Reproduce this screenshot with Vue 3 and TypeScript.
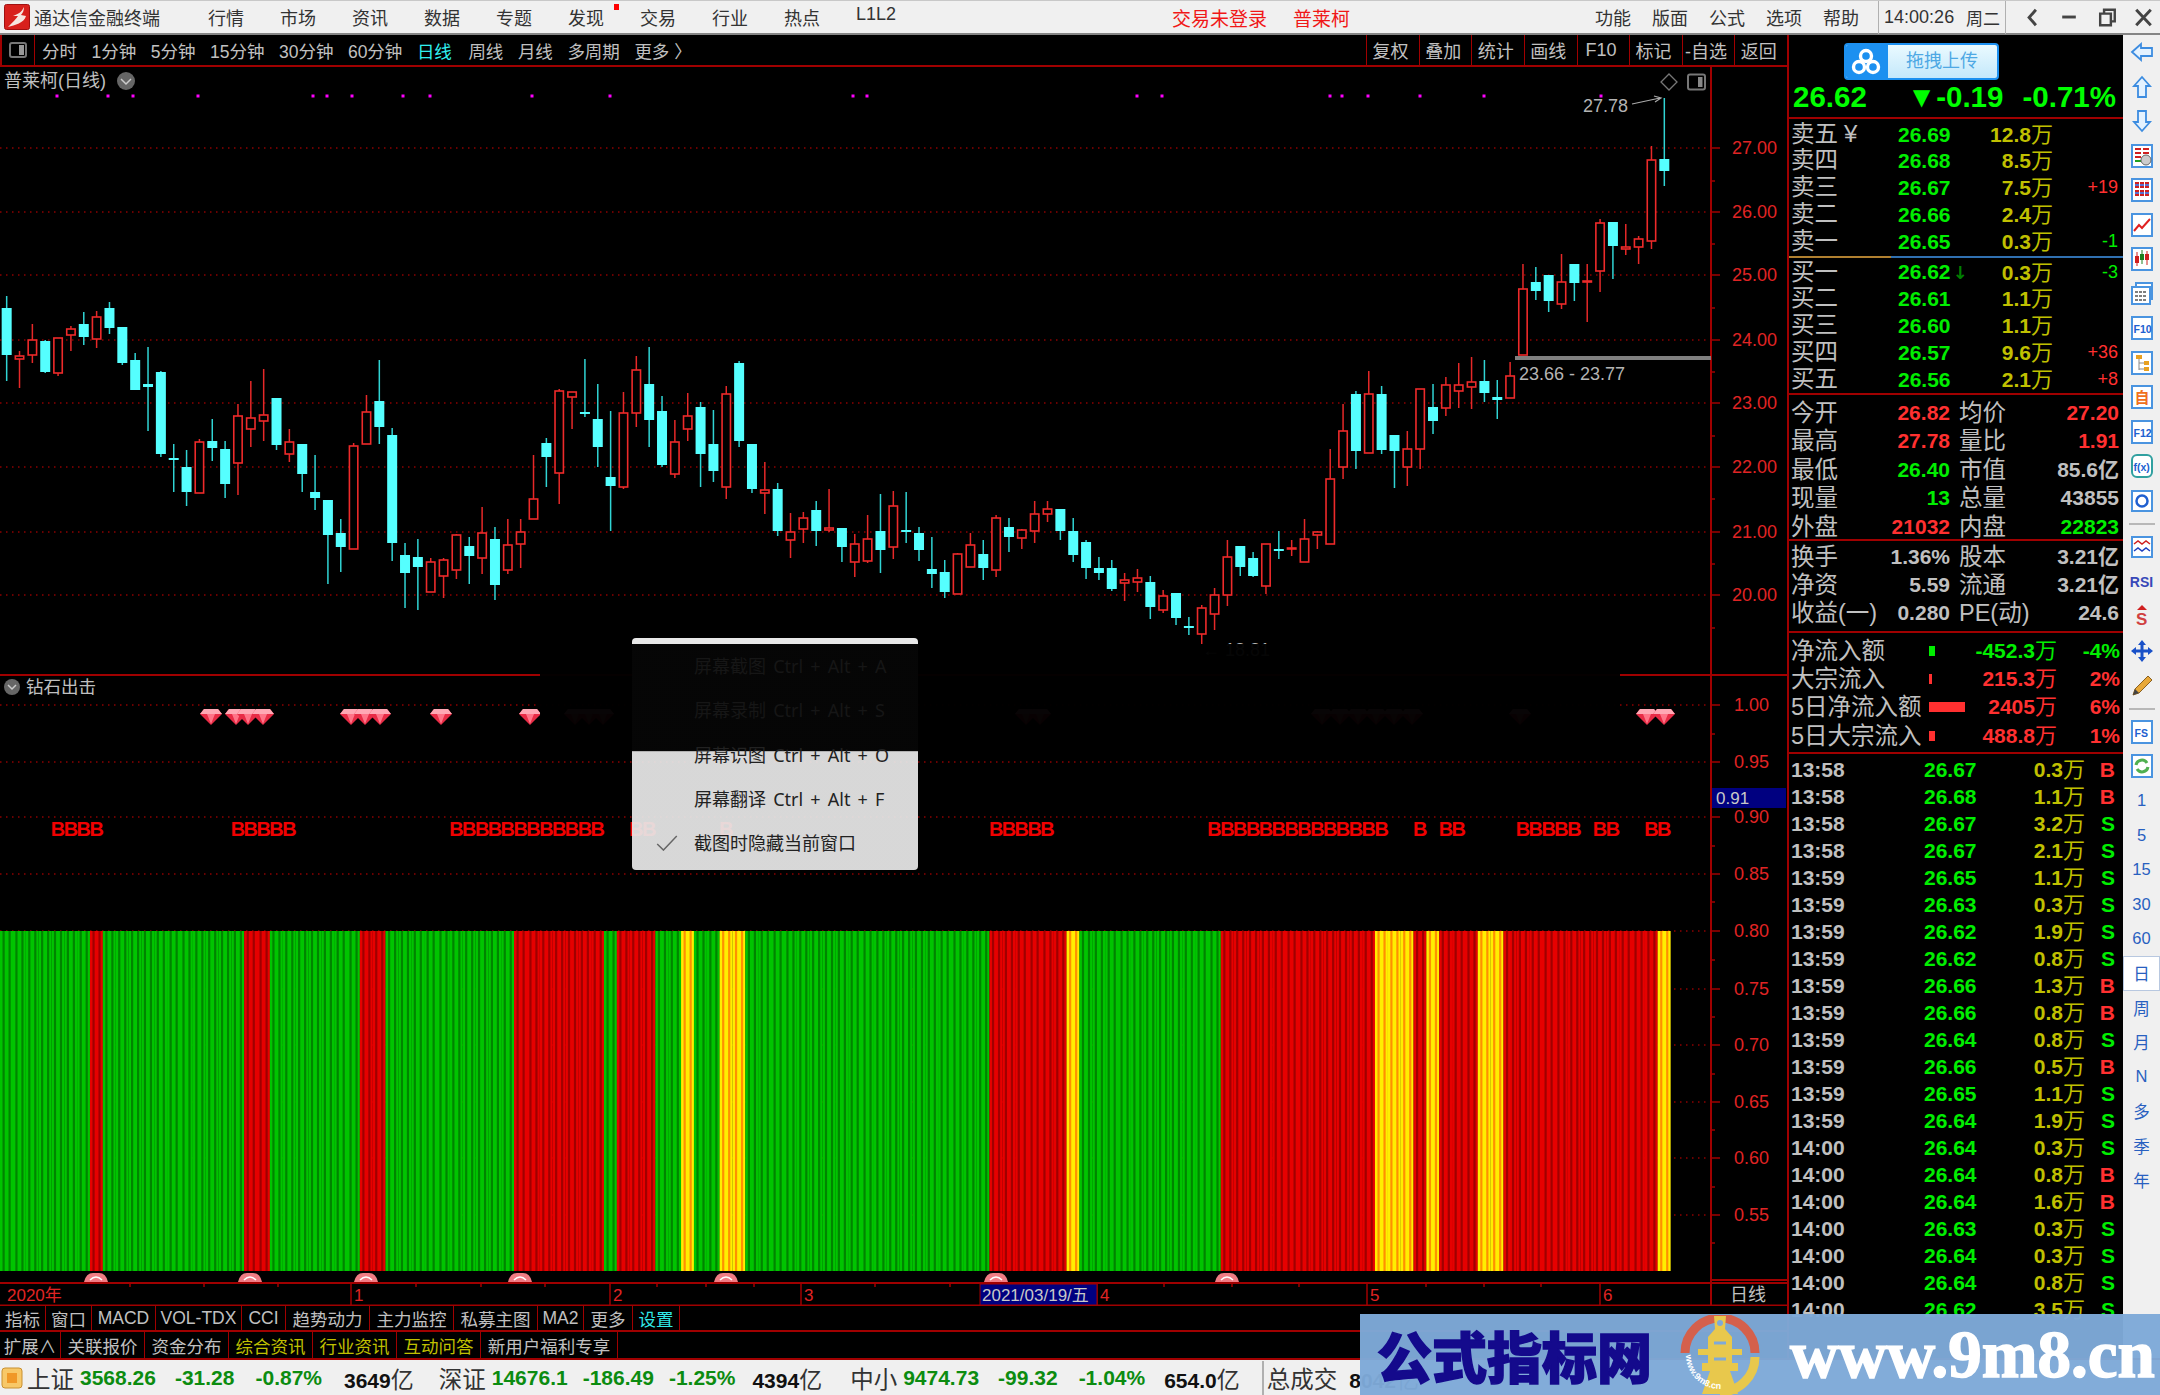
<template>
  <div class="terminal">
    <header class="titlebar">
      <svg class="logo" viewBox="0 0 26 26">
        <rect x="0.5" y="0.5" width="25" height="25" rx="2" fill="#d8201c" stroke="#a01010" />
        <path d="M20 3 C17 9 14 10 9 12 L14 12 C12 15 9 18 4 23 C11 21 20 19 22 12 L17 11 C19 9 20 6 20 3 Z" fill="#f6e6e0" />
      </svg>
      <span class="appname">通达信金融终端</span>
      <nav class="menu">
        <span v-for="m in mainMenu" :key="m" :class="{ dotted: m === '发现' }">{{ m }}</span>
      </nav>
      <span class="login">交易未登录</span>
      <span class="stockname">普莱柯</span>
      <nav class="menu right">
        <span v-for="m in sideMenu" :key="m">{{ m }}</span>
      </nav>
      <div class="clock"><b>14:00:26</b><span>周二</span></div>
      <div class="winctl">
        <svg viewBox="0 0 37 34"><path d="M22 9 L15 17 L22 25" fill="none" stroke="#444" stroke-width="3" /></svg>
        <svg viewBox="0 0 37 34"><rect x="11" y="15" width="14" height="3" fill="#444" /></svg>
        <svg viewBox="0 0 37 34"><path d="M12 13 h11 v12 h-11 z M16 13 v-4 h11 v12 h-4" fill="none" stroke="#444" stroke-width="2.5" /></svg>
        <svg viewBox="0 0 37 34"><path d="M11 9 L26 25 M26 9 L11 25" fill="none" stroke="#444" stroke-width="3" /></svg>
      </div>
    </header>

    <div class="body">
      <section class="left">
        <div class="toolbar">
          <div class="toggle">
            <svg viewBox="0 0 18 16" width="18" height="16"><rect x="1" y="1" width="16" height="14" rx="2" fill="none" stroke="#777" stroke-width="2" /><rect x="10" y="3" width="5" height="10" fill="#999" /></svg>
          </div>
          <div class="periods">
            <span v-for="p in periods" :key="p" :class="{ active: p === '日线' }">{{ p }}</span>
          </div>
          <div class="actions">
            <span v-for="a in actions" :key="a">{{ a }}</span>
          </div>
        </div>

        <svg class="chart" viewBox="0 67 1787 1239" width="1787" height="1239">
          <!-- grid and axis ticks -->
          <line v-for="y in priceGrid" :key="'g' + y" x1="0" x2="1711" :y1="y" :y2="y" class="grid" />
          <line v-for="t in lowerGrid" :key="'l' + t.y" x1="0" x2="1711" :y1="t.y" :y2="t.y" class="grid" />
          <line v-for="y in priceGrid" :key="'t' + y" x1="1711" x2="1720" :y1="y" :y2="y" class="rule" />
          <line v-for="t in lowerGrid" :key="'u' + t.y" x1="1711" x2="1720" :y1="t.y" :y2="t.y" class="rule" />
          <line v-for="y in minorTicks" :key="'m' + y" x1="1711" x2="1715" :y1="y" :y2="y" class="rule" />
          <text v-for="(y, i) in priceGrid" :key="'p' + y" x="1732" :y="y" class="axis">{{ (27 - i).toFixed(2) }}</text>
          <text v-for="t in lowerGrid" :key="'v' + t.y" x="1734" :y="t.y" class="axis">{{ t.label }}</text>

          <!-- frame -->
          <line x1="1711" x2="1711" y1="67" y2="1306" class="rule wide" />
          <line x1="0" x2="1787" y1="675" y2="675" class="rule wide" />
          <line x1="1711" x2="1787" y1="1280" y2="1280" class="rule wide" />
          <line x1="0" x2="1787" y1="1283" y2="1283" class="rule wide" />
          <line x1="0" x2="1787" y1="1305.5" y2="1305.5" class="rule wide" />

          <!-- title row -->
          <text x="4" y="81" class="label title-label">普莱柯(日线)</text>
          <circle cx="126" cy="81" r="9" fill="#666" />
          <path d="M121 79 L126 84 L131 79" fill="none" stroke="#ccc" stroke-width="1.5" />
          <rect v-for="x in signalDots" :key="'d' + x" :x="x - 1.5" y="94.5" width="3" height="3" fill="#ff00ff" />
          <path d="M1669 74 L1677 82 L1669 90 L1661 82 Z" fill="none" stroke="#777" stroke-width="1.3" />
          <rect x="1688" y="74.5" width="17" height="15" rx="2" fill="none" stroke="#777" stroke-width="2" />
          <rect x="1698" y="77" width="4.5" height="10" fill="#888" />

          <!-- candles -->
          <g v-for="(c, i) in candles" :key="'c' + i">
            <line :x1="cx(i)" :x2="cx(i)" :y1="c[0]" :y2="c[1]" :class="c[4] ? 'wick-up' : 'wick-down'" />
            <line :x1="cx(i)" :x2="cx(i)" :y1="c[2]" :y2="c[3]" :class="c[4] ? 'wick-up' : 'wick-down'" />
            <rect v-if="c[4]" :x="cx(i) - 4.2" :y="c[1]" width="8.4" :height="Math.max(c[2] - c[1], 1)" class="body-up" />
            <rect v-else :x="cx(i) - 5" :y="c[1]" width="10" :height="Math.max(c[2] - c[1], 2)" class="body-down" />
          </g>
          <path d="M1632 104 L1660 98 M1654 96 L1661 98 L1655 102" fill="none" stroke="#aaa" stroke-width="1.2" />
          <text x="1583" y="106" class="note">27.78</text>
          <rect x="1515" y="356" width="196" height="4" fill="#808080" />
          <text x="1519" y="374" class="note">23.66 - 23.77</text>
          <text x="1202" y="650" class="note">← 18.81</text>

          <!-- lower pane -->
          <circle cx="12" cy="687" r="8" fill="#666" />
          <path d="M8 685 L12 689 L16 685" fill="none" stroke="#ccc" stroke-width="1.5" />
          <text x="26" y="687" class="label">钻石出击</text>
          <g v-for="x in gems" :key="'e' + x" :transform="`translate(${x} 717)`">
            <path d="M-11 -3 L-7 -8 L7 -8 L11 -3 L0 8 Z" fill="#e82c46" />
            <path d="M-11 -3 L-7 -8 L7 -8 L11 -3 Z" fill="#ffa8b4" />
            <path d="M-4 -3 L0 7 L4 -3 Z" fill="#ff7488" />
          </g>
          <text v-for="i in buySignals" :key="'b' + i" :x="cx(i)" y="829" class="buy">B</text>

          <g v-for="b in bars" :key="'s' + b.x">
            <rect :x="b.x" y="931" width="13" height="340" :fill="b.fill" />
            <rect :x="b.x + 2.5" y="931" width="2.2" height="340" :fill="b.dark" />
            <rect :x="b.x + 8.5" y="931" width="2.2" height="340" :fill="b.dark" />
          </g>

          <g v-for="x in humps" :key="'h' + x" :transform="`translate(${x} 1282)`">
            <path d="M-12 0 Q-10 -9 -3 -9 L3 -9 Q10 -9 12 0 Z" fill="#f07c84" />
            <path d="M-6 -2 Q0 -8 6 -2" fill="none" stroke="#fff" stroke-width="1.5" />
          </g>

          <!-- date axis -->
          <line v-for="x in dateTicks" :key="'k' + x" :x1="x" :x2="x" y1="1283" y2="1287" class="rule" />
          <line v-for="m in months" :key="'n' + m.x" :x1="m.x" :x2="m.x" y1="1283" y2="1305" class="rule" />
          <text x="7" y="1295" class="date">2020年</text>
          <text v-for="m in months" :key="'o' + m.x" :x="m.x + 3" y="1295" class="date">{{ m.label }}</text>
          <rect x="980" y="1284" width="117" height="21" fill="#000080" stroke="#a00000" />
          <text x="982" y="1295" class="cursor-date">2021/03/19/五</text>
          <text x="1730" y="1295" class="label small">日线</text>
          <rect x="1712" y="788" width="74" height="20" fill="#000080" />
          <text x="1716" y="798" class="cursor-date">0.91</text>
        </svg>

        <div class="tabs first">
          <span v-for="t in tabsTop" :key="t" :class="{ cyan: t === '设置' }">{{ t }}</span>
        </div>
        <div class="tabs second">
          <span v-for="(t, i) in tabsBottom" :key="t" :class="{ olive: i >= 3 && i <= 5 }">{{ t }}</span>
        </div>
      </section>

      <aside class="side">
        <div class="quote">
          <div class="stock-head">普莱柯 603566</div>
          <div class="last">
            <span class="now">26.62</span>
            <span class="chg">▼-0.19</span>
            <span class="pct">-0.71%</span>
          </div>
        </div>
        <div class="book asks">
          <div v-for="r in asks" :key="r.name" class="book-row">
            <span class="cn">{{ r.name }}<i v-if="r.name === '卖五'" class="yen">¥</i></span>
            <span class="green num">{{ r.price }}</span>
            <span class="vol num">{{ r.vol }}<em>万</em></span>
            <span class="num delta" :class="r.delta.startsWith('-') ? 'green' : 'red'">{{ r.delta }}</span>
          </div>
        </div>
        <div class="book bids">
          <div v-for="r in bids" :key="r.name" class="book-row">
            <span class="cn">{{ r.name }}</span>
            <span class="green num">{{ r.price }}<i v-if="r.name === '买一'" class="down">↓</i></span>
            <span class="vol num">{{ r.vol }}<em>万</em></span>
            <span class="num delta" :class="r.delta.startsWith('-') ? 'green' : 'red'">{{ r.delta }}</span>
          </div>
        </div>
        <div class="stats">
          <div v-for="r in statsA" :key="r[0]" class="stat-row">
            <span class="cn">{{ r[0] }}</span><span class="num" :class="r[2]">{{ r[1] }}</span>
            <span class="cn">{{ r[3] }}</span><span class="num" :class="r[5]">{{ r[4] }}</span>
          </div>
        </div>
        <div class="stats second">
          <div v-for="r in statsB" :key="r[0]" class="stat-row">
            <span class="cn">{{ r[0] }}</span><span class="num gray">{{ r[1] }}</span>
            <span class="cn">{{ r[2] }}</span><span class="num gray">{{ r[3] }}</span>
          </div>
        </div>
        <div class="flows">
          <div v-for="f in flows" :key="f.name" class="flow-row">
            <span class="cn">{{ f.name }}</span>
            <span class="flow-mid" :class="f.up ? 'red' : 'green'">
              <i class="bar" :style="{ width: f.bar + 'px' }"></i>
              <span class="num">{{ f.value }}<em>万</em></span>
            </span>
            <span class="num flow-pct" :class="f.up ? 'red' : 'green'">{{ f.pct }}</span>
          </div>
        </div>
        <div class="ticks">
          <div v-for="(t, i) in ticks" :key="i" class="tick-row">
            <span class="num gray">{{ t[0] }}</span>
            <span class="num green">{{ t[1] }}</span>
            <span class="vol num">{{ t[2] }}<em>万</em></span>
            <span class="num flag" :class="t[3] === 'B' ? 'red' : 'green'">{{ t[3] }}</span>
          </div>
        </div>
      </aside>

      <aside class="strip">
        <div class="tool"><svg viewBox="0 0 24 24"><path d="M2 12 L11 4 V8 H22 V16 H11 V20 Z" class="ol" /></svg></div>
        <div class="tool"><svg viewBox="0 0 24 24"><path d="M12 2 L20 11 H16 V22 H8 V11 H4 Z" class="ol" /></svg></div>
        <div class="tool"><svg viewBox="0 0 24 24"><path d="M12 22 L20 13 H16 V2 H8 V13 H4 Z" class="ol" /></svg></div>
        <div class="tool"><svg viewBox="0 0 24 24"><rect x="2" y="1" width="20" height="22" class="tile" /><path d="M5 5h6M13 5h6M5 9h6M13 9h6M5 13h6" stroke="#d02020" stroke-width="2" /><path d="M5 17h6" stroke="#20a020" stroke-width="2" /><circle cx="16" cy="16" r="5" fill="#ccc" stroke="#666" /></svg></div>
        <div class="tool"><svg viewBox="0 0 24 24"><rect x="2" y="1" width="20" height="22" class="tile" /><path d="M5 5h14M5 9h14M5 13h14M5 17h14" stroke="#d02020" stroke-width="2" stroke-dasharray="4 1" /><path d="M5 7h14M5 15h14" stroke="#2040c0" stroke-width="1.5" stroke-dasharray="4 1" /></svg></div>
        <div class="tool"><svg viewBox="0 0 24 24"><rect x="2" y="1" width="20" height="22" class="tile" /><path d="M4 18 L9 12 L12 15 L20 6" fill="none" stroke="#e02020" stroke-width="2" /></svg></div>
        <div class="tool"><svg viewBox="0 0 24 24"><rect x="2" y="1" width="20" height="22" class="tile" /><path d="M7 5v14M17 4v14" stroke="#d02020" /><rect x="5" y="9" width="4" height="7" fill="#d02020" /><path d="M12 3v14" stroke="#208020" /><rect x="10" y="7" width="4" height="6" fill="#208020" /><rect x="15" y="7" width="4" height="6" fill="#d02020" /></svg></div>
        <div class="tool"><svg viewBox="0 0 24 24"><rect x="6" y="1" width="16" height="16" class="tile" /><rect x="2" y="5" width="18" height="17" class="tile" /><path d="M5 10h12M5 14h12M5 18h12" stroke="#555" stroke-width="1.5" stroke-dasharray="3 1" /></svg></div>
        <div class="tool"><svg viewBox="0 0 24 24"><rect x="2" y="1" width="20" height="22" class="tile" /><text x="3.5" y="17" class="glyph">F10</text></svg></div>
        <div class="tool"><svg viewBox="0 0 24 24"><rect x="2" y="1" width="20" height="22" class="tile" /><path d="M9 7v12M9 12h5M9 18h5" stroke="#888" /><rect x="6" y="4" width="6" height="4" fill="#e8a020" /><rect x="14" y="10" width="5" height="4" fill="#e8a020" /><rect x="14" y="16" width="5" height="4" fill="#e8a020" /></svg></div>
        <div class="tool"><svg viewBox="0 0 24 24"><rect x="2" y="1" width="20" height="22" class="tile" /><text x="4.5" y="17.5" class="glyph orange">自</text></svg></div>
        <div class="tool"><svg viewBox="0 0 24 24"><rect x="2" y="1" width="20" height="22" class="tile" /><text x="3.5" y="17" class="glyph">F12</text></svg></div>
        <div class="tool"><svg viewBox="0 0 24 24"><rect x="2" y="1" width="20" height="22" rx="5" class="tile teal" /><text x="3.5" y="16.5" class="glyph">f(x)</text></svg></div>
        <div class="tool"><svg viewBox="0 0 24 24"><rect x="2" y="2" width="20" height="20" class="tile" /><circle cx="12" cy="12" r="5.5" fill="none" stroke="#2060d0" stroke-width="2.5" /></svg></div>
        <div class="tool-sep"></div>
        <div class="tool"><svg viewBox="0 0 24 24"><rect x="2" y="2" width="20" height="20" class="tile" /><path d="M4 9 L8 6 L12 9 L16 6 L20 9" fill="none" stroke="#d02020" stroke-width="1.5" /><path d="M4 16 L8 13 L12 16 L16 13 L20 16" fill="none" stroke="#2040c0" stroke-width="1.5" /></svg></div>
        <div class="tool"><span class="rsi">RSI</span></div>
        <div class="tool"><svg viewBox="0 0 24 24"><path d="M12 1 L17 6 H7 Z" fill="#d02020" /><text x="6" y="21" class="glyph dollar">S</text></svg></div>
        <div class="tool"><svg viewBox="0 0 24 24"><path d="M12 1 L16 6 H8 Z M12 23 L16 18 H8 Z M1 12 L6 8 V16 Z M23 12 L18 8 V16 Z" fill="#1850c8" /><path d="M12 5 V19 M5 12 H19" stroke="#1850c8" stroke-width="3" /></svg></div>
        <div class="tool"><svg viewBox="0 0 24 24"><path d="M3 22 L5 16 L18 3 L22 7 L9 20 Z" fill="#e8a838" stroke="#8a6020" /><path d="M3 22 L5 16 L9 20 Z" fill="#444" /></svg></div>
        <div class="tool-sep"></div>
        <div class="tool"><svg viewBox="0 0 24 24"><rect x="2" y="1" width="20" height="22" class="tile" /><text x="4.5" y="17" class="glyph">FS</text></svg></div>
        <div class="tool"><svg viewBox="0 0 24 24"><rect x="2" y="1" width="20" height="22" class="tile" /><path d="M6 11 A6 6 0 0 1 17 9 M18 13 A6 6 0 0 1 7 15" fill="none" stroke="#50b050" stroke-width="3" /></svg></div>
        <div v-for="p in stripLabels" :key="p" class="tool text" :class="{ picked: p === '日' }">{{ p }}</div>
      </aside>
    </div>

    <footer class="statusbar">
      <svg class="status-icon" viewBox="0 0 22 22"><rect x="1" y="1" width="20" height="20" rx="3" fill="#f8c868" stroke="#c89030" /><rect x="6" y="6" width="10" height="10" fill="#f09828" /></svg>
      <div v-for="s in indices" :key="s.name" class="idx">
        <span class="idx-name">{{ s.name }}</span>
        <span class="idx-val">{{ s.val }}</span>
        <span class="idx-chg">{{ s.chg }}</span>
        <span class="idx-pct">{{ s.pct }}</span>
        <span class="idx-amt">{{ s.amt }}<em>亿</em></span>
      </div>
      <div class="idx-total"><span class="idx-name">总成交</span><span class="idx-amt">8042<em>亿</em></span></div>
    </footer>

    <!-- the screenshot tool left its menu on top of the chart -->
    <div class="shade"></div>
    <div class="shot-menu">
      <div v-for="m in shotItems" :key="m" class="shot-item">{{ m }}</div>
      <svg class="shot-check" viewBox="0 0 24 18"><path d="M1 10 L8 17 L23 1" fill="none" stroke="#666" stroke-width="1.6" /></svg>
    </div>

    <div class="upload">
      <span class="upload-icon">
        <svg viewBox="0 0 44 37" width="44" height="37"><g fill="none" stroke="#fff" stroke-width="3.4"><circle cx="22" cy="13" r="5.5" /><circle cx="15" cy="24" r="5.5" /><circle cx="29" cy="24" r="5.5" /></g></svg>
      </span>
      <span class="upload-text">拖拽上传</span>
    </div>

    <div class="watermark">
      <span class="wm-title">公式指标网</span>
      <svg class="wm-logo" viewBox="0 0 80 80" width="80" height="80">
        <path id="wmArc" d="M6 40 A34 34 0 0 0 40 74" fill="none" />
        <path d="M5 38 A35 35 0 0 1 75 38" fill="none" stroke="#d4604c" stroke-width="9" />
        <path d="M75 42 A35 35 0 0 1 40 77" fill="none" stroke="#e8c84c" stroke-width="9" />
        <path d="M34 1 H46 L45 14 L52 22 V34 L62 34 V40 L52 40 V48 L58 48 V56 L50 56 L58 79 H22 L30 56 L22 56 V48 L28 48 V40 L18 40 V34 L28 34 V22 L35 14 Z" fill="#e8c84c" />
        <circle cx="40" cy="8" r="3" fill="#7ea9d8" />
        <path d="M34 28 H46 M34 44 H46" stroke="#7ea9d8" stroke-width="3" />
        <text class="wm-small"><textPath href="#wmArc">www.9m8.cn</textPath></text>
      </svg>
      <span class="wm-url">www.9m8.cn</span>
    </div>
  </div>
</template>

<script setup lang="ts">
// high, body top, body bottom, low, 1 = rising (hollow red) / 0 = falling (solid cyan)
type Candle = [number, number, number, number, number]

const candles: Candle[] = [
  [296, 308, 355, 381, 0], [351, 356, 359, 388, 1], [324, 340, 355, 363, 1], [340, 341, 372, 373, 0], [338, 338, 373, 376, 1],
  [326, 329, 335, 351, 1], [312, 324, 337, 345, 0], [311, 317, 339, 348, 1], [302, 308, 328, 334, 0], [327, 327, 363, 365, 0],
  [353, 360, 390, 390, 0], [347, 384, 387, 431, 0], [371, 372, 454, 457, 0], [444, 458, 459, 492, 0], [450, 467, 492, 506, 0],
  [439, 442, 493, 493, 1], [419, 441, 448, 461, 0], [441, 449, 484, 498, 0], [404, 416, 463, 495, 1], [381, 418, 429, 447, 1],
  [369, 415, 421, 441, 1], [398, 398, 445, 450, 0], [429, 442, 454, 462, 1], [444, 444, 474, 492, 0], [455, 492, 498, 510, 0],
  [500, 500, 535, 584, 0], [519, 533, 547, 572, 0], [443, 446, 549, 549, 1], [395, 412, 444, 444, 1], [360, 401, 427, 444, 0],
  [428, 435, 543, 561, 0], [543, 555, 573, 608, 0], [539, 557, 567, 610, 0], [558, 562, 592, 592, 1], [558, 560, 576, 598, 1],
  [534, 535, 570, 579, 1], [537, 546, 556, 584, 0], [507, 533, 558, 574, 1], [527, 539, 585, 600, 0], [519, 545, 570, 574, 1],
  [519, 532, 544, 568, 1], [455, 499, 519, 519, 1], [438, 443, 457, 487, 0], [389, 391, 473, 504, 1], [392, 392, 397, 429, 1],
  [359, 412, 414, 417, 0], [384, 419, 447, 467, 0], [411, 477, 486, 531, 0], [392, 413, 487, 489, 1], [356, 370, 413, 427, 1],
  [347, 384, 420, 447, 0], [396, 411, 465, 467, 0], [420, 442, 474, 478, 1], [393, 416, 429, 441, 1], [402, 407, 454, 487, 0],
  [410, 444, 471, 482, 0], [386, 394, 487, 499, 1], [361, 363, 441, 447, 0], [444, 444, 489, 493, 0], [462, 490, 493, 514, 1],
  [483, 489, 531, 536, 0], [513, 532, 540, 558, 1], [512, 518, 529, 543, 1], [501, 510, 531, 546, 0], [489, 528, 530, 532, 1],
  [528, 528, 547, 562, 0], [534, 544, 562, 577, 1], [515, 539, 561, 563, 1], [494, 531, 550, 573, 0], [491, 506, 547, 559, 1],
  [492, 530, 532, 543, 0], [527, 533, 550, 561, 0], [537, 569, 574, 588, 0], [560, 572, 592, 598, 0], [553, 554, 594, 594, 1],
  [533, 545, 567, 567, 1], [540, 554, 568, 580, 0], [515, 518, 570, 577, 1], [518, 527, 537, 552, 0], [529, 530, 538, 549, 1],
  [501, 514, 531, 543, 1], [501, 509, 514, 522, 1], [509, 509, 531, 540, 0], [518, 531, 555, 562, 0], [540, 542, 568, 579, 0],
  [557, 568, 573, 580, 0], [560, 568, 589, 591, 0], [573, 580, 583, 601, 1], [569, 578, 582, 592, 1], [576, 582, 607, 619, 0],
  [590, 596, 610, 613, 1], [593, 593, 618, 625, 0], [617, 626, 628, 635, 0], [605, 608, 634, 644, 1], [588, 595, 614, 630, 1],
  [540, 557, 595, 606, 1], [546, 546, 567, 576, 0], [552, 558, 576, 577, 0], [544, 544, 586, 594, 1], [531, 549, 550, 559, 0],
  [540, 548, 549, 556, 1], [519, 539, 562, 562, 1], [531, 532, 535, 549, 1], [449, 479, 544, 544, 1], [404, 431, 467, 479, 1],
  [391, 394, 451, 469, 0], [371, 394, 453, 453, 1], [386, 394, 450, 454, 0], [435, 435, 451, 488, 0], [431, 449, 467, 486, 1],
  [389, 389, 449, 469, 1], [384, 407, 421, 434, 0], [377, 385, 408, 416, 1], [363, 385, 391, 408, 1], [357, 382, 387, 409, 1],
  [360, 381, 393, 402, 0], [380, 397, 400, 419, 0], [362, 376, 398, 398, 1], [264, 289, 355, 355, 1], [267, 282, 291, 300, 0],
  [275, 275, 301, 312, 0], [254, 282, 304, 309, 1], [264, 264, 283, 301, 0], [264, 281, 282, 322, 1], [219, 223, 271, 292, 1],
  [222, 222, 246, 279, 0], [224, 247, 249, 255, 1], [236, 239, 247, 264, 1], [146, 160, 241, 249, 1], [98, 159, 171, 186, 0],
]

const cx = (i: number) => 6.67 + 12.85 * i

const mainMenu = ['行情', '市场', '资讯', '数据', '专题', '发现', '交易', '行业', '热点', 'L1L2']
const sideMenu = ['功能', '版面', '公式', '选项', '帮助']
const periods = ['分时', '1分钟', '5分钟', '15分钟', '30分钟', '60分钟', '日线', '周线', '月线', '多周期', '更多 〉']
const actions = ['复权', '叠加', '统计', '画线', 'F10', '标记', '-自选', '返回']
const tabsTop = ['指标', '窗口', 'MACD', 'VOL-TDX', 'CCI', '趋势动力', '主力监控', '私募主图', 'MA2', '更多', '设置']
const tabsBottom = ['扩展∧', '关联报价', '资金分布', '综合资讯', '行业资讯', '互动问答', '新用户福利专享']
const stripLabels = ['1', '5', '15', '30', '60', '日', '周', '月', 'N', '多', '季', '年']

const priceGrid = [148, 212, 275, 340, 403, 467, 532, 595]
const lowerGrid = [705, 762, 817, 874, 931, 989, 1045, 1102, 1158, 1215].map((y, i) => ({
  y,
  label: (1 - i * 0.05).toFixed(2),
}))
const minorTicks = [181, 244, 308, 372, 436, 499, 564, 628, 734, 790, 846, 902, 960, 1017, 1074, 1130, 1187, 1243]
const signalDots = [57, 108, 133, 198, 313, 327, 352, 403, 430, 532, 610, 853, 867, 1137, 1162, 1330, 1342, 1368, 1420, 1484, 1601]
const gems = [211, 236, 248, 263, 351, 365, 380, 441, 530, 575, 589, 603, 1026, 1040, 1322, 1340, 1358, 1376, 1394, 1412, 1520, 1647, 1664]
const humps = [96, 250, 366, 520, 726, 996, 1227]
const dateTicks = [130, 204, 278, 416, 481, 545, 657, 706, 754, 875, 950, 1164, 1232, 1299, 1426, 1484, 1541]
const months = [
  { x: 351, label: '1' },
  { x: 610, label: '2' },
  { x: 801, label: '3' },
  { x: 1097, label: '4' },
  { x: 1367, label: '5' },
  { x: 1600, label: '6' },
]

const range = (from: number, to: number) => Array.from({ length: to - from + 1 }, (_, k) => from + k)
const buySignals = [
  ...range(4, 7), ...range(18, 22), ...range(35, 46), 49, 50, 56, ...range(77, 81),
  ...range(94, 107), 110, 112, 113, ...range(118, 122), 124, 125, 128, 129,
]

// colour runs of the bottom indicator: [first bar, colour]
const runs: [number, string][] = [
  [0, 'g'], [7, 'r'], [8, 'g'], [19, 'r'], [21, 'g'], [28, 'r'], [30, 'g'], [40, 'r'], [47, 'g'], [48, 'r'],
  [51, 'g'], [53, 'y'], [54, 'g'], [56, 'y'], [58, 'g'], [77, 'r'], [83, 'y'], [84, 'g'], [95, 'r'], [107, 'y'],
  [110, 'r'], [111, 'y'], [112, 'r'], [115, 'y'], [117, 'r'], [129, 'y'],
]
const palette: Record<string, [string, string]> = {
  g: ['#00c400', '#008400'],
  r: ['#e60000', '#a00000'],
  y: ['#ffee00', '#ff9000'],
}
const bars = range(0, 129).map((i) => {
  const run = [...runs].reverse().find((r) => r[0] <= i)!
  return { x: 12.85 * i, fill: palette[run[1]][0], dark: palette[run[1]][1] }
})

const asks = [
  { name: '卖五', price: '26.69', vol: '12.8', delta: '' },
  { name: '卖四', price: '26.68', vol: '8.5', delta: '' },
  { name: '卖三', price: '26.67', vol: '7.5', delta: '+19' },
  { name: '卖二', price: '26.66', vol: '2.4', delta: '' },
  { name: '卖一', price: '26.65', vol: '0.3', delta: '-1' },
]
const bids = [
  { name: '买一', price: '26.62', vol: '0.3', delta: '-3' },
  { name: '买二', price: '26.61', vol: '1.1', delta: '' },
  { name: '买三', price: '26.60', vol: '1.1', delta: '' },
  { name: '买四', price: '26.57', vol: '9.6', delta: '+36' },
  { name: '买五', price: '26.56', vol: '2.1', delta: '+8' },
]
const statsA = [
  ['今开', '26.82', 'red', '均价', '27.20', 'red'],
  ['最高', '27.78', 'red', '量比', '1.91', 'red'],
  ['最低', '26.40', 'green', '市值', '85.6亿', 'gray'],
  ['现量', '13', 'green', '总量', '43855', 'gray'],
  ['外盘', '21032', 'red', '内盘', '22823', 'green'],
]
const statsB = [
  ['换手', '1.36%', '股本', '3.21亿'],
  ['净资', '5.59', '流通', '3.21亿'],
  ['收益(一)', '0.280', 'PE(动)', '24.6'],
]
const flows = [
  { name: '净流入额', bar: 6, value: '-452.3', pct: '-4%', up: false },
  { name: '大宗流入', bar: 3, value: '215.3', pct: '2%', up: true },
  { name: '5日净流入额', bar: 36, value: '2405', pct: '6%', up: true },
  { name: '5日大宗流入', bar: 6, value: '488.8', pct: '1%', up: true },
]
const ticks = [
  ['13:58', '26.67', '0.3', 'B'], ['13:58', '26.68', '1.1', 'B'], ['13:58', '26.67', '3.2', 'S'], ['13:58', '26.67', '2.1', 'S'],
  ['13:59', '26.65', '1.1', 'S'], ['13:59', '26.63', '0.3', 'S'], ['13:59', '26.62', '1.9', 'S'], ['13:59', '26.62', '0.8', 'S'],
  ['13:59', '26.66', '1.3', 'B'], ['13:59', '26.66', '0.8', 'B'], ['13:59', '26.64', '0.8', 'S'], ['13:59', '26.66', '0.5', 'B'],
  ['13:59', '26.65', '1.1', 'S'], ['13:59', '26.64', '1.9', 'S'], ['14:00', '26.64', '0.3', 'S'], ['14:00', '26.64', '0.8', 'B'],
  ['14:00', '26.64', '1.6', 'B'], ['14:00', '26.63', '0.3', 'S'], ['14:00', '26.64', '0.3', 'S'], ['14:00', '26.64', '0.8', 'S'],
  ['14:00', '26.62', '3.5', 'S'],
]
const indices = [
  { name: '上证', val: '3568.26', chg: '-31.28', pct: '-0.87%', amt: '3649' },
  { name: '深证', val: '14676.1', chg: '-186.49', pct: '-1.25%', amt: '4394' },
  { name: '中小', val: '9474.73', chg: '-99.32', pct: '-1.04%', amt: '654.0' },
]
const shotItems = [
  '屏幕截图 Ctrl + Alt + A',
  '屏幕录制 Ctrl + Alt + S',
  '屏幕识图 Ctrl + Alt + O',
  '屏幕翻译 Ctrl + Alt + F',
  '截图时隐藏当前窗口',
]
</script>

<style scoped>
.terminal {
  position: relative;
  width: 2160px;
  height: 1395px;
  overflow: hidden;
  display: flex;
  flex-direction: column;
  background: #000;
  color: #c0c0c0;
  font-family: "Liberation Sans", "Noto Sans CJK SC", sans-serif;
}
em, i { font-style: normal; }

/* title bar */
.titlebar {
  height: 35px;
  box-sizing: border-box;
  flex: none;
  display: flex;
  align-items: center;
  background: #f0f0f0;
  border-top: 1px solid #c8c8c8;
  border-bottom: 2px solid #858585;
  color: #333;
  font-size: 18px;
  white-space: nowrap;
}
.logo { width: 26px; height: 26px; margin-left: 4px; flex: none; }
.appname { margin-left: 4px; flex: none; }
.menu { display: flex; margin-left: 48px; gap: 36px; flex: none; }
.menu span { position: relative; }
.menu.right { margin-left: 245px; gap: 21px; }
.dotted::after {
  content: "";
  position: absolute;
  left: 46px;
  top: 0;
  width: 5px;
  height: 6px;
  background: #f00;
}
.login { margin-left: 276px; color: #f01818; font-size: 19px; flex: none; }
.stockname { margin-left: 26px; color: #f01818; font-size: 19px; flex: none; }
.clock {
  margin-left: 19px;
  height: 33px;
  display: flex;
  align-items: center;
  padding: 0 5px;
  border-left: 1px solid #b0b0b0;
  border-right: 1px solid #b0b0b0;
  flex: none;
}
.clock b { font-weight: normal; font-size: 18px; width: 82px; }
.clock span { font-size: 17px; }
.winctl { display: flex; margin-left: 8px; flex: none; }
.winctl svg { width: 37px; height: 33px; display: block; }

/* main frame */
.body { flex: 1; min-height: 0; display: flex; }
.left { width: 1787px; flex: none; display: flex; flex-direction: column; }
.toolbar {
  height: 32px;
  box-sizing: border-box;
  flex: none;
  display: flex;
  align-items: center;
  border-left: 2px solid #a00000;
  border-bottom: 2px solid #a00000;
  font-size: 17.5px;
}
.toggle {
  width: 33px;
  height: 30px;
  box-sizing: border-box;
  flex: none;
  display: flex;
  align-items: center;
  justify-content: center;
  border-right: 1px solid #a00000;
}
.periods { display: flex; gap: 14.5px; margin-left: 7px; white-space: nowrap; }
.periods .active { color: #30f0f0; margin-right: 2px; }
.actions { margin-left: auto; display: flex; height: 30px; font-size: 18px; }
.actions span {
  width: 52.6px;
  box-sizing: border-box;
  display: flex;
  align-items: center;
  justify-content: center;
  border-left: 1px solid #a00000;
  padding-right: 5px;
  white-space: nowrap;
}

/* chart */
.chart { display: block; flex: none; font-family: inherit; }
.grid { stroke: #8c0000; stroke-width: 1.5; stroke-dasharray: 1.5 4.5; }
.rule { stroke: #a00000; stroke-width: 1.5; }
.rule.wide { stroke-width: 2; }
.wick-up { stroke: #e62828; stroke-width: 1.5; }
.wick-down { stroke: #30d4d4; stroke-width: 1.5; }
.body-up { fill: #000; stroke: #ee2a2a; stroke-width: 1.6; }
.body-down { fill: #55ffff; }
.axis, .label, .note, .buy, .date, .cursor-date { dominant-baseline: middle; transform: translateY(1.5px); }
.axis { fill: #e02424; font-size: 18px; }
.label { fill: #c0c0c0; font-size: 17.5px; }
.title-label { font-size: 18px; }
.label.small { font-size: 18px; }
.note { fill: #b4b4b4; font-size: 18px; }
.buy { fill: #f00000; font-size: 20px; font-weight: bold; text-anchor: middle; }
.date { fill: #e02424; font-size: 17px; }
.cursor-date { fill: #c8c8c8; font-size: 17px; }

/* indicator tabs */
.tabs {
  height: 26px;
  flex: none;
  box-sizing: border-box;
  display: grid;
  border-bottom: 2px solid #a00000;
  font-size: 17.5px;
}
.tabs span {
  display: flex;
  align-items: center;
  justify-content: center;
  border-right: 1px solid #a00000;
  white-space: nowrap;
}
.tabs.first { grid-template-columns: 46px 46px 64px 86px 44px 84px 84px 84px 46px 49px 47px; justify-content: start; }
.tabs.second { grid-template-columns: 61px 84px 84px 84px 84px 84px 137px; justify-content: start; border-bottom: none; }
.cyan { color: #30e8e8; }
.olive { color: #c0c000; }

/* quote panel */
.side {
  width: 336px;
  flex: none;
  box-sizing: border-box;
  border-left: 2px solid #a00000;
  padding: 0 5px 0 2px;
  overflow: hidden;
  margin: 0;
  display: flex;
  flex-direction: column;
}
.cn { font-size: 23.5px; color: #c0c0c0; white-space: nowrap; }
.num { font-size: 21px; font-weight: bold; white-space: nowrap; }
.num em { font-weight: normal; font-size: 22px; }
.green { color: #00ee00; }
.red { color: #ff3030; }
.gray { color: #c0c0c0; }
.vol { color: #c0c000; text-align: right; }
.delta { text-align: right; font-weight: normal; font-size: 18px; }
.quote {
  height: 84px;
  flex: none;
  margin: 0 -5px 0 -2px;
  padding: 0 7px 0 4px;
  border-bottom: 2px solid #a00000;
  box-sizing: border-box;
}
.stock-head {
  height: 45px;
  line-height: 54px;
  padding-left: 60px;
  color: #30e8e8;
  font-size: 22px;
  white-space: nowrap;
}
.last {
  display: grid;
  grid-template-columns: 114px 112px 1fr;
  color: #00ff00;
  font-size: 29.5px;
  font-weight: bold;
  line-height: 34px;
  white-space: nowrap;
}
.last .pct { text-align: right; }
.book { flex: none; }
.asks { height: 137px; padding-top: 1px; box-sizing: border-box; }
.bids {
  height: 139px;
  position: relative;
  margin: 0 -5px 0 -2px;
  padding: 2px 5px 0 2px;
  box-sizing: border-box;
  border-bottom: 2px solid #a00000;
  background: linear-gradient(to right, #b08030 102px, #3070b0 102px) top left / 100% 2px no-repeat;
}
.book-row {
  display: grid;
  grid-template-columns: 107px 60px 95px 65px;
  height: 27px;
  line-height: 27px;
  align-items: center;
}
.yen { margin-left: 6px; font-size: 24px; }
.down { color: #008000; font-family: "DejaVu Sans", sans-serif; font-size: 18px; margin-left: 2px; }
.stats {
  flex: none;
  height: 146px;
  margin: 0 -5px 0 -2px;
  padding: 3.5px 4px 0 2px;
  box-sizing: border-box;
  border-bottom: 2px solid #a00000;
}
.stats.second { height: 92px; padding-top: 2px; }
.stat-row {
  display: grid;
  grid-template-columns: 70px 89px 9px 70px 90px;
  height: 28.5px;
  line-height: 28.5px;
}
.stat-row > :nth-child(2), .stat-row > :nth-child(4) { text-align: right; }
.stat-row > :nth-child(3) { grid-column: 4; }
.stat-row > :nth-child(4) { grid-column: 5; }
.stats.second .stat-row { height: 28px; line-height: 28px; }
.flows {
  flex: none;
  height: 121px;
  margin: 0 -5px 0 -2px;
  padding: 3.5px 3px 0 2px;
  box-sizing: border-box;
  border-bottom: 2px solid #a00000;
}
.flow-row {
  display: grid;
  grid-template-columns: 138px 128px 63px;
  height: 28.4px;
  line-height: 28.4px;
}
.flow-mid { display: flex; align-items: center; justify-content: space-between; }
.bar { display: block; height: 10px; background: currentColor; flex: none; }
.flow-pct { text-align: right; }
.ticks { flex: 1; min-height: 0; overflow: hidden; padding-top: 1.5px; }
.tick-row {
  display: grid;
  grid-template-columns: 133px 60px 101px 33px;
  height: 27px;
  line-height: 27px;
}
.flag { text-align: right; padding-right: 3px; }

/* tool strip */
.strip {
  flex: 1;
  background: #f0f0f0;
  display: flex;
  flex-direction: column;
  align-items: center;
}
.tool {
  width: 100%;
  height: 34.5px;
  flex: none;
  display: flex;
  align-items: center;
  justify-content: center;
}
.tool svg { width: 24px; height: 24px; display: block; }
.tool.text { color: #2860c0; font-size: 16.5px; height: 34.5px; }
.tool.picked { background: #fff; box-shadow: inset 0 0 0 1px #b8c8e0; }
.tool-sep { height: 2px; margin: 5px 0; width: 26px; background: #b8b8b8; flex: none; }
.ol { fill: #e4f2ff; stroke: #3c8ce0; stroke-width: 1.8; }
.tile { fill: #fff; stroke: #4a94e0; stroke-width: 2; }
.tile.teal { stroke: #30a0a0; }
.glyph { font-size: 10.5px; font-weight: bold; fill: #2060d0; }
.glyph.orange { fill: #f07020; font-size: 15px; }
.glyph.dollar { fill: #d04040; font-size: 17px; }
.rsi { color: #3848b8; font-size: 14px; font-weight: bold; }

/* status bar */
.statusbar {
  height: 37px;
  flex: none;
  box-sizing: border-box;
  display: flex;
  align-items: center;
  background: #f0f0f0;
  border-top: 2px solid #a00000;
  padding-left: 1px;
  white-space: nowrap;
}
.status-icon { width: 22px; height: 22px; flex: none; }
.idx { display: flex; align-items: center; margin-left: 25px; }
.idx:first-of-type, .status-icon + .idx { margin-left: 4px; }
.idx-name { font-size: 23.5px; color: #333; }
.idx-val { margin-left: 6px; }
.idx-chg { margin-left: 19px; }
.idx-pct { margin-left: 21px; }
.idx-val, .idx-chg, .idx-pct { font-size: 21px; font-weight: bold; color: #0c8c10; }
.idx-amt { margin-left: 22px; font-size: 21px; font-weight: bold; color: #111; }
.idx-amt em { font-size: 23px; font-weight: normal; color: #333; }
.status-icon + .idx + .idx .idx-chg { margin-left: 15px; }
.status-icon + .idx + .idx .idx-pct { margin-left: 15px; }
.status-icon + .idx + .idx .idx-amt { margin-left: 17px; }
.status-icon + .idx + .idx + .idx { margin-left: 28px; }
.status-icon + .idx + .idx + .idx .idx-val { margin-left: 6px; }
.status-icon + .idx + .idx + .idx .idx-chg { margin-left: 19px; }
.status-icon + .idx + .idx + .idx .idx-pct { margin-left: 21px; }
.status-icon + .idx + .idx + .idx .idx-amt { margin-left: 19px; }
.idx-total { display: flex; align-items: center; margin-left: 22px; padding-left: 3px; border-left: 2px solid #b0b0b0; }
.idx-total .idx-amt { margin-left: 12px; }

/* overlays */
.shade {
  position: absolute;
  left: 540px;
  top: 644px;
  width: 1080px;
  height: 107px;
  background: rgba(0, 0, 0, 0.97);
}
.shot-menu {
  position: absolute;
  left: 632px;
  top: 638px;
  width: 286px;
  height: 232px;
  box-sizing: border-box;
  padding-top: 6px;
  border-radius: 4px;
  background: linear-gradient(to bottom,
    #e8e8e8 6px, rgba(6, 6, 6, 0.96) 6px, rgba(6, 6, 6, 0.96) 113px,
    #8a8a8a 113px, rgba(232, 232, 232, 0.93) 114px);
}
.shot-item {
  height: 44.25px;
  line-height: 44.25px;
  padding-left: 62px;
  color: #222;
  font-family: "Noto Sans", "Noto Sans CJK SC", sans-serif;
  font-size: 18px;
  word-spacing: 2.5px;
  white-space: nowrap;
}
.shot-item:nth-child(-n + 2) { color: #161616; }
.shot-check { position: absolute; left: 24px; top: 197px; width: 22px; height: 16px; }
.upload {
  position: absolute;
  left: 1844px;
  top: 43px;
  width: 155px;
  height: 37px;
  box-sizing: border-box;
  display: flex;
  border-radius: 4px;
  overflow: hidden;
  border: 2px solid #1c90f0;
  background: linear-gradient(to bottom, #eafaff, #c4e8fb);
}
.upload-icon { width: 44px; flex: none; margin: -2px 0 -2px -2px; background: #1c90f0; }
.upload-icon svg { display: block; }
.upload-text { margin-left: 18px; line-height: 33px; color: #4ea8e4; font-size: 18px; white-space: nowrap; }
.watermark {
  position: absolute;
  left: 1360px;
  top: 1314px;
  width: 800px;
  height: 81px;
  display: flex;
  align-items: center;
  background: rgba(126, 169, 216, 0.97);
  white-space: nowrap;
}
.wm-title {
  margin-left: 17px;
  font-family: "Noto Sans CJK SC", sans-serif;
  font-weight: 900;
  font-size: 55px;
  line-height: 81px;
  color: #140a8c;
  -webkit-text-stroke: 1.5px #140a8c;
}
.wm-logo { margin-left: 28px; flex: none; }
.wm-small { font-size: 9px; font-weight: bold; fill: #fff; }
.wm-url {
  margin-left: 30px;
  font-family: "Liberation Serif", serif;
  font-weight: bold;
  font-size: 67px;
  line-height: 81px;
  color: #fff;
  -webkit-text-stroke: 1.5px #fff;
}
</style>

<style>
html, body { margin: 0; background: #000; }
</style>
